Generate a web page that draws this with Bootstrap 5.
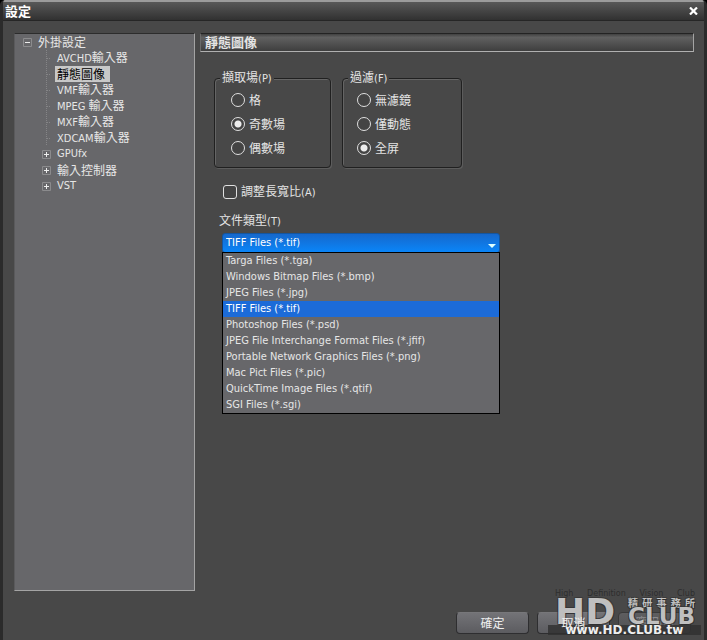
<!DOCTYPE html>
<html lang="zh-Hant">
<head>
<meta charset="utf-8">
<meta name="viewport" content="width=device-width, initial-scale=1">
<title>設定</title>
<link href="https://cdn.jsdelivr.net/npm/bootstrap@5.3.0/dist/css/bootstrap.min.css" rel="stylesheet">
<script src="https://cdn.jsdelivr.net/npm/bootstrap@5.3.0/dist/js/bootstrap.bundle.min.js" defer></script>
<style>
body{background:#000;color:#e4e4e4;font:12px/16px "Noto Sans CJK TC",sans-serif}
.lat{font-family:"DejaVu Sans Condensed","DejaVu Sans",sans-serif;font-size:11px}
.win{background:#484848;border:solid #2b2b2b;border-width:0 3px 0 3px;border-radius:5px 5px 0 0;overflow:hidden}
.titlebar{height:21px;padding:0 4px 0 2px;background:linear-gradient(#585858,#313131);border-top:2px solid #9b9b9b;border-bottom:1px solid #262626;font-size:13px;line-height:16px;font-weight:700;color:#fff}
.close-x{width:14px;height:14px}
.work{padding:12px 10px 0 11px;gap:5px}
.tree{width:181px;background:#67676a;border:1px solid;border-color:#2c2c2c #a4a4a4 #a4a4a4 #5a5a5c}
.tree ul{margin:0;padding:0;list-style:none}
.tree a{color:#e6e6e6;text-decoration:none;white-space:nowrap}
.node{height:16px;padding-left:8px;gap:6px}
.kids .node{padding-left:27px}
.twig{width:9px;height:16px;flex:none}
.tree a.sel{background:#c8c8c8;color:#000;padding:0 5px 0 2px;margin-left:-2px;line-height:16px}
.head{height:19px;padding:0 4px;background:linear-gradient(#414141,#606060 20%,#3e3e3e);border:1px solid;border-color:#232323 #a4a4a4 #b0b0b0 #6a6a6a;font-size:13px;line-height:16px;font-weight:700}
.form-area{padding:17px 0 0 14px}
.groups{gap:11px}
.grp{border:1px solid #202020;border-radius:4px;box-shadow:inset 1px 1px 0 #656565,1px 1px 0 #5c5c5c;padding:1px 0 7px 16px}
.grp-a{width:117px}
.grp-b{width:120px;padding-left:14px}
.grp legend{float:none;width:auto;margin:0 0 0 -11px;padding:0 2px;font-size:12px;line-height:16px;background:#484848}
.grp-b legend{margin-left:-9px}
.opt{height:24px;gap:4px}
.opt input,.chk input{appearance:none;width:14px;height:14px;margin:0;border:1px solid #e0e0e0;border-radius:50%;background:#444;flex:none}
.opt input:checked{background:radial-gradient(circle,#ececec 3px,#444 4px)}
.chk{padding:15px 0 0 9px;gap:4px}
.chk input{border-radius:3px}
.ftype{padding-top:11px;padding-left:5px}
.combo{width:278px;margin:3px 0 0 3px}
.combo select{height:20px;width:100%;display:block;border:1px solid #1456a0;border-radius:3px;padding:0 0 0 3px;color:#fff;appearance:none;
background:url("data:image/svg+xml,%3Csvg xmlns='http://www.w3.org/2000/svg' width='8' height='4'%3E%3Cpath d='M0 0h8L4 4z' fill='%23dff'/%3E%3C/svg%3E") no-repeat right 3px top 10px,linear-gradient(#1668cc,#0a85f8)}
.options{top:19px;left:0;right:0;border:1px solid #000;background:#67676a;border-radius:0}
.options button{height:16px;padding:0 3px;border:0;border-radius:0;background:none;color:#e6e6e6;text-align:left;line-height:16px}
.options button.on{background:#1c6bd8;color:#fff}
.foot{padding:21px 13px 6px;gap:8px}
.pb{width:73px;height:22px;padding:0;font-size:12px;line-height:18px;color:#eee;border:1px solid #2e2e30;border-top-color:#77777a;border-radius:4px;background:linear-gradient(#737377,#5c5c60)}
.pb:disabled{opacity:1;color:#8b8b8d;border-color:#3a3a3a;background:linear-gradient(#5e5e60,#505052)}
.wm{right:3px;bottom:5px;width:153px;pointer-events:none;font-family:"DejaVu Sans",sans-serif}
.wm-top{padding:0 6px 0 7px}
.wm-tag{font-size:8px;line-height:8px;color:#2e2e2e}
.wm-name{color:#e2e2e2d0;text-shadow:1px 1px 0 #2228,-1px -1px 0 #3338,1px -1px 0 #3338,-1px 1px 0 #2228}
.wm-hd{font-size:36px;line-height:27px;font-weight:700}
.wm-cjk{font:700 10px/10px "Noto Sans CJK TC",sans-serif}
.wm-club{font-size:23px;line-height:17px;font-weight:700}
.wm-url{background:#303030cc;font-size:12px;line-height:10px;font-weight:700;color:#eee}
</style>
</head>
<body>
<div class="win position-relative d-flex flex-column min-vh-100">
  <header class="titlebar d-flex justify-content-between align-items-center">
    <span>設定</span>
    <button type="button" class="btn p-0 border-0 close-x d-flex align-items-center justify-content-center" aria-label="關閉"><svg width="9" height="8" viewBox="0 0 9 8"><path d="M1 0.5L8 7.5M8 .5L1 7.5" stroke="#fff" stroke-width="2.2"/></svg></button>
  </header>
  <div class="work d-flex flex-grow-1">
    <nav class="tree flex-shrink-0" aria-label="設定">
      <ul>
        <li><div class="node d-flex align-items-center"><svg class="twig" viewBox="0 0 9 16"><path d="M.5 4.5h8v8h-8z" fill="none" stroke="#8b8b8d"/><path d="M2 8.5h5" stroke="#eee"/></svg><a href="#">外掛設定</a></div>
        <ul class="kids">
          <li class="node d-flex align-items-center"><svg class="twig" viewBox="0 0 9 16"><path d="M4.5 0v16M5 8.5h4" stroke="#858587" stroke-dasharray="1 1"/></svg><a href="#"><span class="lat">AVCHD</span>輸入器</a></li>
          <li class="node d-flex align-items-center"><svg class="twig" viewBox="0 0 9 16"><path d="M4.5 0v16M5 8.5h4" stroke="#858587" stroke-dasharray="1 1"/></svg><a href="#" class="sel" aria-current="page">靜態圖像</a></li>
          <li class="node d-flex align-items-center"><svg class="twig" viewBox="0 0 9 16"><path d="M4.5 0v16M5 8.5h4" stroke="#858587" stroke-dasharray="1 1"/></svg><a href="#"><span class="lat">VMF</span>輸入器</a></li>
          <li class="node d-flex align-items-center"><svg class="twig" viewBox="0 0 9 16"><path d="M4.5 0v16M5 8.5h4" stroke="#858587" stroke-dasharray="1 1"/></svg><a href="#"><span class="lat">MPEG </span>輸入器</a></li>
          <li class="node d-flex align-items-center"><svg class="twig" viewBox="0 0 9 16"><path d="M4.5 0v16M5 8.5h4" stroke="#858587" stroke-dasharray="1 1"/></svg><a href="#"><span class="lat">MXF</span>輸入器</a></li>
          <li class="node d-flex align-items-center"><svg class="twig" viewBox="0 0 9 16"><path d="M4.5 0v16M5 8.5h4" stroke="#858587" stroke-dasharray="1 1"/></svg><a href="#"><span class="lat">XDCAM</span>輸入器</a></li>
          <li class="node d-flex align-items-center"><svg class="twig" viewBox="0 0 9 16"><path d="M.5 4.5h8v8h-8z" fill="none" stroke="#8b8b8d"/><path d="M2 8.5h5M4.5 6v5" stroke="#eee"/></svg><a href="#" class="lat">GPUfx</a></li>
          <li class="node d-flex align-items-center"><svg class="twig" viewBox="0 0 9 16"><path d="M.5 4.5h8v8h-8z" fill="none" stroke="#8b8b8d"/><path d="M2 8.5h5M4.5 6v5" stroke="#eee"/></svg><a href="#">輸入控制器</a></li>
          <li class="node d-flex align-items-center"><svg class="twig" viewBox="0 0 9 16"><path d="M.5 4.5h8v8h-8z" fill="none" stroke="#8b8b8d"/><path d="M2 8.5h5M4.5 6v5" stroke="#eee"/></svg><a href="#" class="lat">VST</a></li>
        </ul></li>
      </ul>
    </nav>
    <main class="flex-grow-1">
      <h1 class="head m-0">靜態圖像</h1>
      <form class="form-area">
        <div class="groups d-flex">
          <fieldset class="grp grp-a">
            <legend>擷取場<span class="lat">(P)</span></legend>
            <div class="opt d-flex align-items-center"><input type="radio" name="field" id="f1"><label for="f1">格</label></div>
            <div class="opt d-flex align-items-center"><input type="radio" name="field" id="f2" checked><label for="f2">奇數場</label></div>
            <div class="opt d-flex align-items-center"><input type="radio" name="field" id="f3"><label for="f3">偶數場</label></div>
          </fieldset>
          <fieldset class="grp grp-b">
            <legend>過濾<span class="lat">(F)</span></legend>
            <div class="opt d-flex align-items-center"><input type="radio" name="filter" id="g1"><label for="g1">無濾鏡</label></div>
            <div class="opt d-flex align-items-center"><input type="radio" name="filter" id="g2"><label for="g2">僅動態</label></div>
            <div class="opt d-flex align-items-center"><input type="radio" name="filter" id="g3" checked><label for="g3">全屏</label></div>
          </fieldset>
        </div>
        <div class="chk d-flex align-items-center"><input type="checkbox" id="aspect"><label for="aspect">調整長寬比<span class="lat">(A)</span></label></div>
        <div class="ftype">
          <label for="type" class="d-block">文件類型<span class="lat">(T)</span></label>
          <div class="combo position-relative">
            <select id="type" class="lat"><option>TIFF Files (*.tif)</option></select>
            <div class="options position-absolute d-flex flex-column lat">
              <button type="button">Targa Files (*.tga)</button>
              <button type="button">Windows Bitmap Files (*.bmp)</button>
              <button type="button">JPEG Files (*.jpg)</button>
              <button type="button" class="on">TIFF Files (*.tif)</button>
              <button type="button">Photoshop Files (*.psd)</button>
              <button type="button">JPEG File Interchange Format Files (*.jfif)</button>
              <button type="button">Portable Network Graphics Files (*.png)</button>
              <button type="button">Mac Pict Files (*.pic)</button>
              <button type="button">QuickTime Image Files (*.qtif)</button>
              <button type="button">SGI Files (*.sgi)</button>
            </div>
          </div>
        </div>
      </form>
    </main>
  </div>
  <footer class="foot d-flex justify-content-end">
    <button type="button" class="btn pb">確定</button>
    <button type="button" class="btn pb"><span class="position-relative z-1">取消</span></button>
    <button type="button" class="btn pb" disabled>應用<span class="lat">(A)</span></button>
  </footer>
  <div class="wm position-absolute">
    <div class="wm-top">
      <div class="wm-tag d-flex justify-content-between"><span>High</span><span>Definition</span><span>Vision</span><span>Club</span></div>
      <div class="wm-name d-flex justify-content-between align-items-center">
        <span class="wm-hd">HD</span>
        <span>
          <span class="wm-cjk d-flex justify-content-between"><span>精</span><span>研</span><span>事</span><span>務</span><span>所</span></span>
          <span class="wm-club d-block">CLUB</span>
        </span>
      </div>
    </div>
    <div class="wm-url text-center">www.HD.CLUB.tw</div>
  </div>
</div>
</body>
</html>
